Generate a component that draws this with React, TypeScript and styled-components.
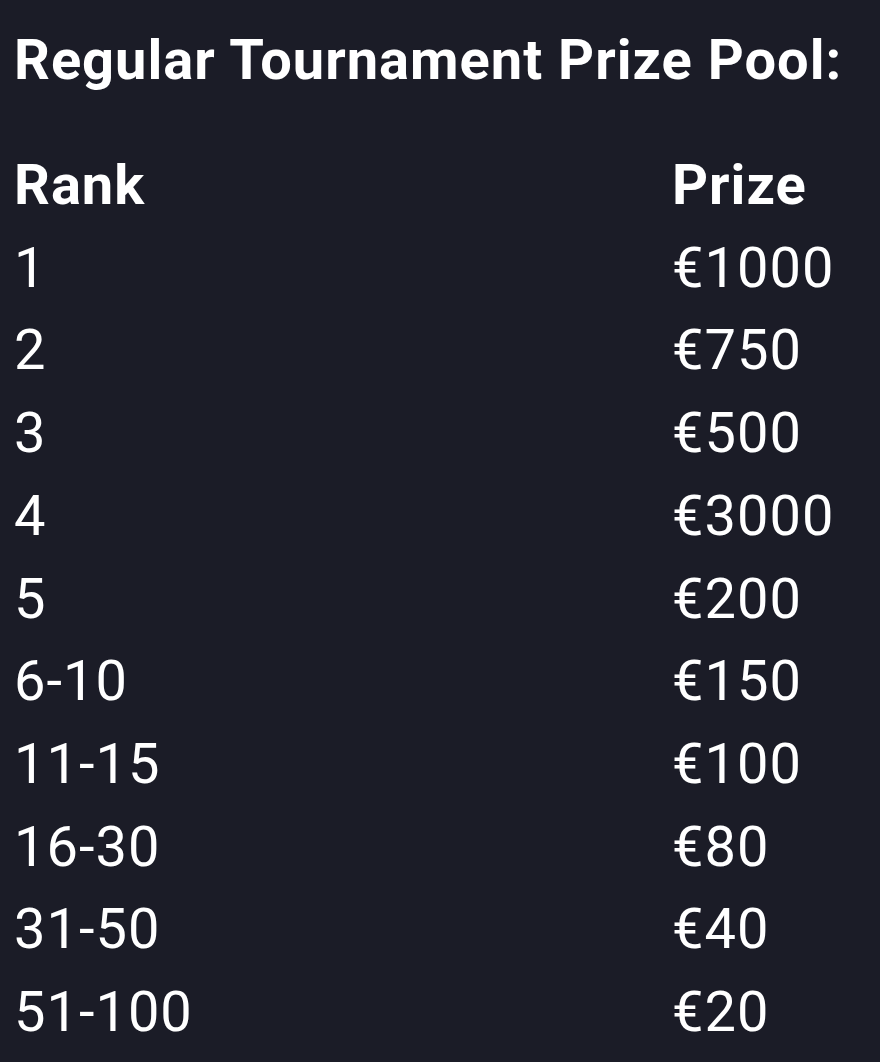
import React from "react";
import styled, { createGlobalStyle } from "styled-components";

const GlobalStyle = createGlobalStyle`
  html, body {
    margin: 0;
    padding: 0;
    background: #1b1c27;
  }
  body {
    font-family: Roboto, "Liberation Sans", sans-serif;
    color: #ffffff;
  }
`;

const Wrapper = styled.div`
  padding: 19px 14px 0 14px;
  min-height: 1062px;
  box-sizing: border-box;
  background: #1b1c27;
`;

const Title = styled.h2`
  margin: 0 0 43px 0;
  font-size: 56px;
  line-height: 82px;
  font-weight: 700;
  letter-spacing: 1px;
  white-space: nowrap;
`;

const Table = styled.div`
  display: grid;
  grid-template-columns: 658px 1fr;
  font-size: 56px;
  line-height: 82.7px;
  letter-spacing: 1px;
`;

const Cell = styled.div<{ $head?: boolean }>`
  font-weight: ${(p) => (p.$head ? 700 : 400)};
  white-space: nowrap;
`;

const prizes: [string, string][] = [
  ["1", "€1000"],
  ["2", "€750"],
  ["3", "€500"],
  ["4", "€3000"],
  ["5", "€200"],
  ["6-10", "€150"],
  ["11-15", "€100"],
  ["16-30", "€80"],
  ["31-50", "€40"],
  ["51-100", "€20"],
];

export default function App() {
  return (
    <Wrapper>
      <GlobalStyle />
      <Title>Regular Tournament Prize Pool:</Title>
      <Table>
        <Cell $head>Rank</Cell>
        <Cell $head>Prize</Cell>
        {prizes.map(([rank, prize]) => (
          <React.Fragment key={rank}>
            <Cell>{rank}</Cell>
            <Cell>{prize}</Cell>
          </React.Fragment>
        ))}
      </Table>
    </Wrapper>
  );
}
